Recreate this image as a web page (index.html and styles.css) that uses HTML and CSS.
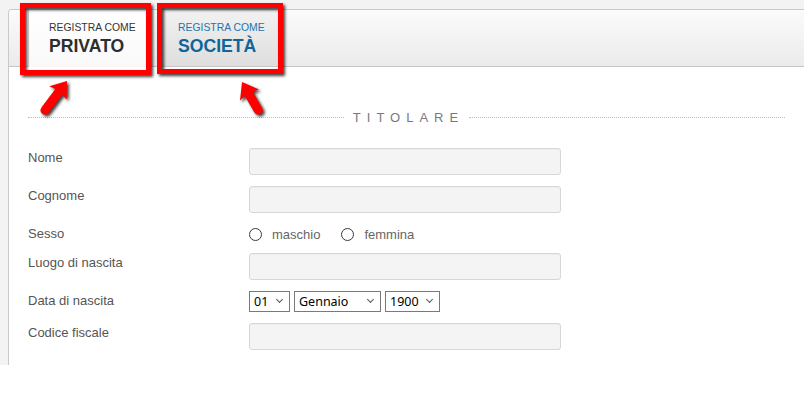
FILE: index.html
```
<!DOCTYPE html>
<html lang="it">
<head>
<meta charset="utf-8">
<title>Registrazione</title>
<link rel="stylesheet" href="styles.css">
</head>
<body>
<div class="page">
  <div class="panel">
    <div class="tabsbar">
      <div class="tab tab-active">
        <span class="tab-small">REGISTRA COME</span>
        <span class="tab-big">PRIVATO</span>
      </div>
      <div class="tab tab-other">
        <span class="tab-small">REGISTRA COME</span>
        <span class="tab-big">SOCIETÀ</span>
      </div>
    </div>
    <div class="content">
      <div class="section-title">
        <span class="dots"></span>
        <span class="title-text">TITOLARE</span>
        <span class="dots"></span>
      </div>
      <div class="form">
        <div class="row">
          <label class="lbl">Nome</label>
          <input class="txt" type="text">
        </div>
        <div class="row">
          <label class="lbl">Cognome</label>
          <input class="txt" type="text">
        </div>
        <div class="row row-radio">
          <label class="lbl">Sesso</label>
          <div class="radios">
            <label class="radio"><input type="radio" name="sesso"><span>maschio</span></label>
            <label class="radio"><input type="radio" name="sesso"><span>femmina</span></label>
          </div>
        </div>
        <div class="row">
          <label class="lbl">Luogo di nascita</label>
          <input class="txt" type="text">
        </div>
        <div class="row row-date">
          <label class="lbl">Data di nascita</label>
          <div class="selects">
            <span class="sel sel-day"><select><option>01</option></select></span>
            <span class="sel sel-month"><select><option>Gennaio</option></select></span>
            <span class="sel sel-year"><select><option>1900</option></select></span>
          </div>
        </div>
        <div class="row">
          <label class="lbl">Codice fiscale</label>
          <input class="txt" type="text">
        </div>
      </div>
    </div>
  </div>
</div>
<svg class="annot" width="300" height="130" viewBox="0 0 300 130">
  <rect x="22.5" y="5.5" width="126" height="67" fill="none" stroke="#ff0000" stroke-width="5"/>
  <rect x="159.5" y="5.5" width="121" height="66" fill="none" stroke="#ff0000" stroke-width="5"/>
  <g transform="translate(67 81) rotate(37)">
    <path d="M0 0 L11 15 L4.5 13.5 L4.5 36 Q4.5 41 0 41 Q-4.5 41 -4.5 36 L-4.5 13.5 L-11 15 Z" fill="#ff0000"/>
  </g>
  <g transform="translate(242 82) rotate(-30)">
    <path d="M0 0 L11 15 L4.5 13.5 L4.5 32 Q4.5 37 0 37 Q-4.5 37 -4.5 32 L-4.5 13.5 L-11 15 Z" fill="#ff0000"/>
  </g>
</svg>
</body>
</html>
```
FILE: styles.css
```
html, body {
  margin: 0;
  padding: 0;
  background: #ffffff;
  overflow: hidden;
}
body {
  font-family: "Liberation Sans", Arial, sans-serif;
  width: 804px;
  height: 402px;
  position: relative;
}
.page {
  background: #f3f3f3;
  height: 365px;
  box-sizing: border-box;
  padding: 9px 0 0 8px;
  overflow: hidden;
}
.panel {
  width: 830px;
  height: 356px;
  background: #ffffff;
  border-top: 1px solid #c9c9c9;
  border-left: 1px solid #c9c9c9;
  border-top-left-radius: 4px;
  overflow: hidden;
}
.tabsbar {
  height: 56px;
  border-bottom: 1px solid #c6c6c6;
  background: linear-gradient(#fbfbfb, #ebebeb);
  display: flex;
  padding-left: 19px;
}
.tab {
  height: 56px;
  box-sizing: border-box;
  padding: 12px 0 0 21px;
  display: flex;
  flex-direction: column;
}
.tab-active {
  width: 118px;
  background: linear-gradient(#ffffff, #f9f9f9);
  border-left: 1px solid #d6d6d6;
  padding-left: 20px;
  height: 57px;
  margin-bottom: -1px;
}
.tab-other {
  width: 123px;
  margin-left: 11px;
  background: linear-gradient(#f2f2f2, #dedede);
}
.tab-small {
  font-size: 10.4px;
  line-height: 12px;
  color: #333333;
}
.tab-big {
  font-size: 17.6px;
  line-height: 20px;
  margin-top: 2px;
  font-weight: bold;
  color: #2e2e2e;
}
.tab-other .tab-small {
  color: #2474aa;
}
.tab-other .tab-big {
  color: #0f6499;
}
.content {
  padding: 0 19px;
}
.section-title {
  margin-top: 43px;
  width: 757px;
  display: flex;
  align-items: center;
  height: 15px;
}
.dots {
  flex: 1;
  border-top: 1px dotted #bdbdbd;
  height: 0;
}
.title-text {
  font-size: 13px;
  line-height: 15px;
  letter-spacing: 6px;
  color: #767a80;
  margin: 0 5px 0 9px;
}
.form {
  margin-top: 23px;
}
.row {
  display: flex;
  align-items: flex-start;
  margin-bottom: 11px;
}
.lbl {
  width: 221px;
  flex: none;
  font-size: 13px;
  line-height: 18px;
  padding-top: 1px;
  color: #555555;
}
.txt {
  width: 312px;
  height: 27px;
  box-sizing: border-box;
  margin: 0;
  background: #f4f4f4;
  border: 1px solid #d7d7d7;
  border-radius: 3px;
  box-shadow: inset 0 1px 1px rgba(0,0,0,0.03);
  font: 13px "Liberation Sans", Arial, sans-serif;
}
.row-radio {
  height: 20px;
  align-items: center;
  margin-bottom: 9px;
}
.row-radio .lbl {
  align-self: flex-start;
}
.radios {
  display: flex;
  align-items: center;
  gap: 21px;
}
.radio {
  display: flex;
  align-items: center;
  gap: 10px;
  font-size: 13px;
  line-height: 15px;
  color: #666666;
}
.radio input {
  appearance: none;
  -webkit-appearance: none;
  width: 13px;
  height: 13px;
  margin: 0;
  border: 1px solid #3a3a3a;
  border-radius: 50%;
  background: #ffffff;
  box-sizing: border-box;
}
.row-date {
  height: 21px;
}
.selects {
  display: flex;
  gap: 4px;
}
.sel {
  position: relative;
  display: block;
  height: 21px;
}
.sel select {
  appearance: none;
  -webkit-appearance: none;
  height: 21px;
  box-sizing: border-box;
  margin: 0;
  border: 1px solid #7a7a7a;
  border-radius: 0;
  background: #ffffff;
  color: #000000;
  font: 12.5px "Noto Sans", "Open Sans", sans-serif;
  padding: 0 0 0 4px;
  line-height: 19px;
}
.sel::after {
  content: "";
  position: absolute;
  right: 8px;
  top: 6px;
  width: 4px;
  height: 4px;
  border-right: 1px solid #555555;
  border-bottom: 1px solid #555555;
  transform: rotate(45deg);
  pointer-events: none;
}
.sel-day select { width: 41px; }
.sel-month select { width: 87px; }
.sel-year select { width: 55px; }
.annot {
  position: absolute;
  left: 0;
  top: 0;
  pointer-events: none;
  filter: drop-shadow(2px 2px 1.5px rgba(0,0,0,0.75));
}
```
